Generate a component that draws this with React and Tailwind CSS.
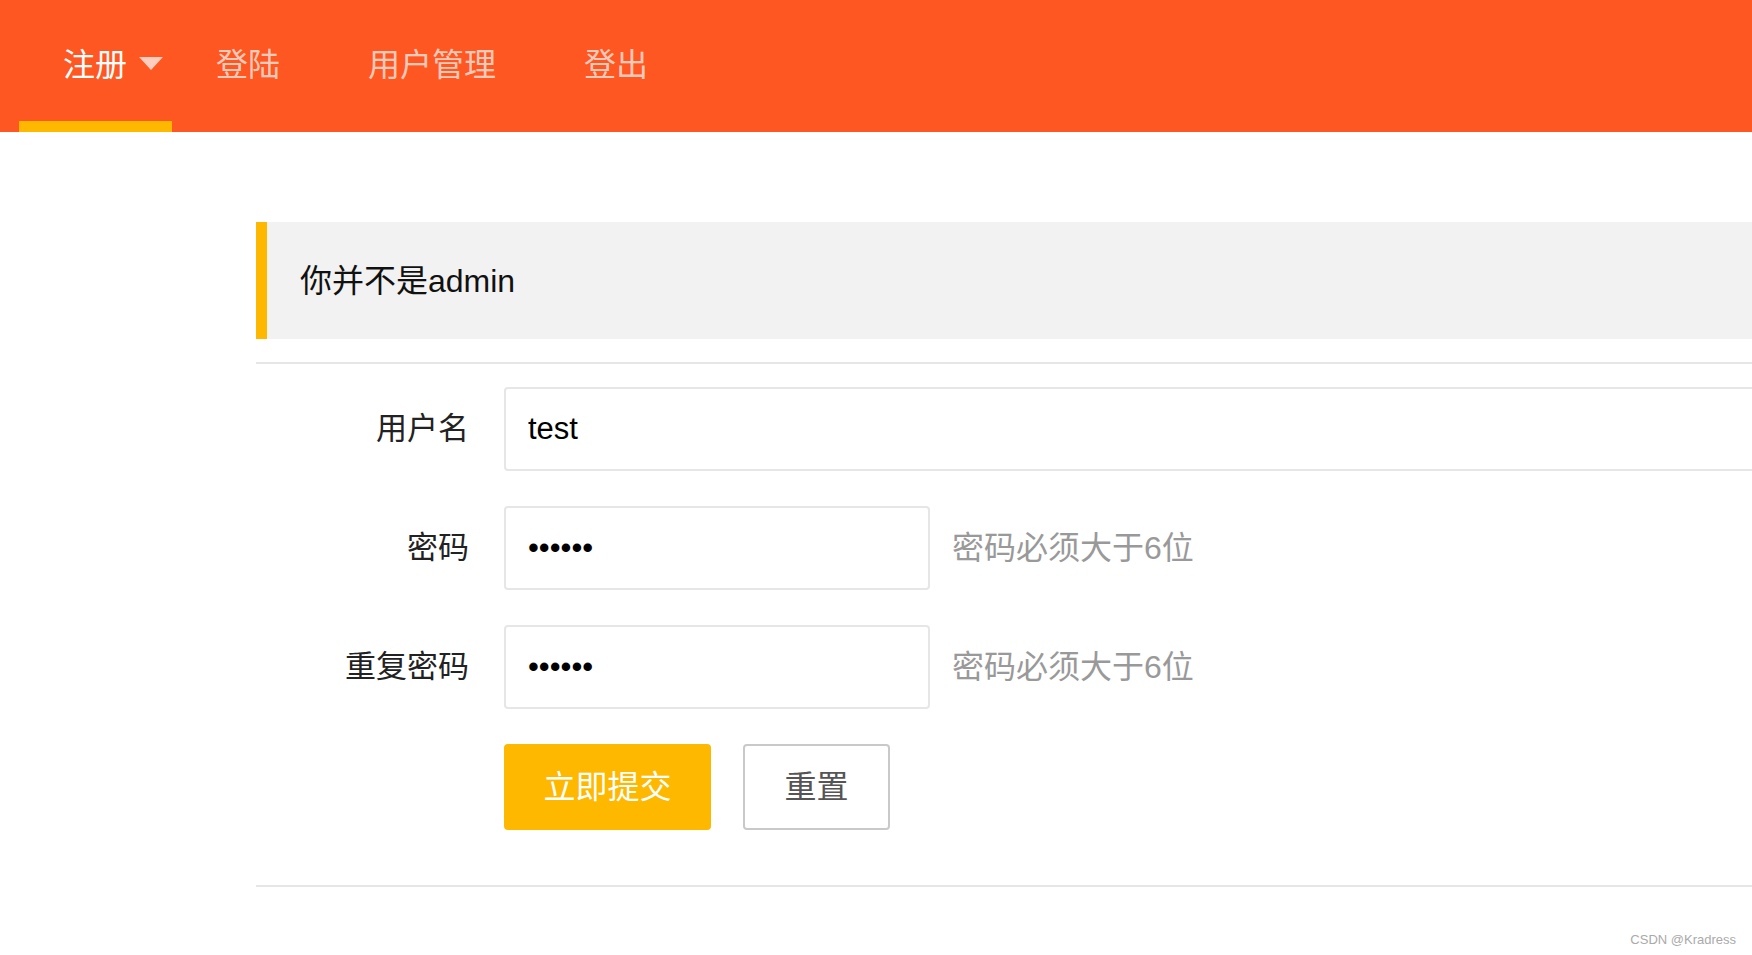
import { useState } from "react";

const navItems = ["登陆", "用户管理", "登出"];

const PasswordRow = ({ label }) => (
  <div className="flex items-center h-[84px]">
    <label className="w-[248px] pr-[35px] text-right text-[31px] text-[#222]">{label}</label>
    <input
      type="password"
      defaultValue="123456"
      readOnly
      className="w-[426px] h-[84px] border-2 border-[#e6e6e6] rounded-[4px] pl-[22px] text-[31px] text-black outline-none bg-white"
    />
    <span className="ml-[22px] text-[#999]">密码必须大于6位</span>
  </div>
);

const App = () => {
  const [form] = useState({ username: "test" });

  return (
    <div className="relative w-[1752px] h-[955px] overflow-hidden bg-white font-['Liberation_Sans','Noto_Sans_CJK_SC',sans-serif] text-[32px]">
      {/* top nav */}
      <nav className="h-[132px] bg-[#FF5722] flex pl-[19px] text-[32px]">
        <div className="relative w-[153px] pl-[44px] flex items-center pb-[2px] text-white">
          注册
          <span className="absolute left-[120px] top-[57px] w-0 h-0 border-x-[12.5px] border-t-[13px] border-x-transparent border-t-[rgba(255,255,255,0.7)]"></span>
          <span className="absolute left-0 right-0 bottom-0 h-[11px] bg-[#FFB800]"></span>
        </div>
        {navItems.map((item) => (
          <div
            key={item}
            className="px-[44px] flex items-center pb-[2px] text-[rgba(255,255,255,0.7)]"
          >
            {item}
          </div>
        ))}
      </nav>

      <div className="ml-[256px] w-[2000px] pt-[90px]">
        <div className="h-[117px] flex items-center pl-[33px] border-l-[11px] border-[#FFB800] bg-[#f2f2f2] text-[#111]">
          你并不是admin
        </div>

        <div className="mt-[23px] h-[2px] bg-[#e6e6e6]"></div>

        <form className="mt-[23px] flex flex-col gap-[35px]">
          <div className="flex items-center h-[84px]">
            <label className="w-[248px] pr-[35px] text-right text-[31px] text-[#222]">用户名</label>
            <input
              type="text"
              defaultValue={form.username}
              readOnly
              className="flex-1 h-[84px] border-2 border-[#e6e6e6] rounded-[4px] pl-[22px] text-[31px] text-black outline-none bg-white"
            />
          </div>

          <PasswordRow label="密码" />
          <PasswordRow label="重复密码" />

          <div className="flex pl-[248px]">
            <button
              type="button"
              className="w-[207px] h-[86px] bg-[#FFB800] text-white rounded-[4px]"
            >
              立即提交
            </button>
            <button
              type="button"
              className="ml-[32px] w-[147px] h-[86px] border-2 border-[#C9C9C9] text-[#555] bg-white rounded-[4px]"
            >
              重置
            </button>
          </div>
        </form>

        <div className="mt-[55px] h-[2px] bg-[#e6e6e6]"></div>
      </div>

      <span className="absolute right-[16px] bottom-[6px] text-[13px] text-[#aaa] font-['Liberation_Sans',sans-serif]">
        CSDN @Kradress
      </span>
    </div>
  );
};

export default App;
